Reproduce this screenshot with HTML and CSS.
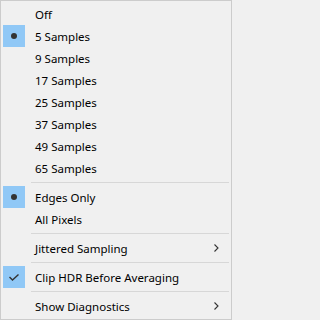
FILE: index.html
```html
<!DOCTYPE html>
<html>
<head>
<meta charset="utf-8">
<link rel="stylesheet" href="styles.css">
</head>
<body>
<div class="menu">
  <div class="item"><span class="icon"></span><span class="label">Off</span></div>
  <div class="item"><span class="icon checked"><span class="dot"></span></span><span class="label">5 Samples</span></div>
  <div class="item"><span class="icon"></span><span class="label">9 Samples</span></div>
  <div class="item"><span class="icon"></span><span class="label">17 Samples</span></div>
  <div class="item"><span class="icon"></span><span class="label">25 Samples</span></div>
  <div class="item"><span class="icon"></span><span class="label">37 Samples</span></div>
  <div class="item"><span class="icon"></span><span class="label">49 Samples</span></div>
  <div class="item"><span class="icon"></span><span class="label">65 Samples</span></div>
  <div class="sep"></div>
  <div class="item"><span class="icon checked"><span class="dot"></span></span><span class="label">Edges Only</span></div>
  <div class="item"><span class="icon"></span><span class="label">All Pixels</span></div>
  <div class="sep"></div>
  <div class="item"><span class="icon"></span><span class="label">Jittered Sampling</span><svg class="arrow" width="5" height="8" viewBox="0 0 5 8"><path d="M0.5 0.5 L4 4 L0.5 7.5" fill="none" stroke="#333" stroke-width="1.1"/></svg></div>
  <div class="sep"></div>
  <div class="item"><span class="icon checked"><svg width="10" height="7" viewBox="0 0 10 7"><path d="M0.5 3 L3.5 6 L9.5 0.5" fill="none" stroke="#333" stroke-width="1.4"/></svg></span><span class="label">Clip HDR Before Averaging</span></div>
  <div class="sep"></div>
  <div class="item"><span class="icon"></span><span class="label">Show Diagnostics</span><svg class="arrow" width="5" height="8" viewBox="0 0 5 8"><path d="M0.5 0.5 L4 4 L0.5 7.5" fill="none" stroke="#333" stroke-width="1.1"/></svg></div>
</div>
</body>
</html>
```

FILE: styles.css
```css
html, body {
  margin: 0;
  padding: 0;
  background: #f0f0f0;
}
.menu {
  width: 232px;
  height: 320px;
  box-sizing: border-box;
  border: 1px solid #cccccc;
  padding: 2px;
  background: #f0f0f0;
  font-family: "Noto Sans", sans-serif;
  font-size: 11.5px;
  color: #000;
  display: flex;
  flex-direction: column;
}
.item {
  height: 22px;
  display: flex;
  align-items: center;
}
.icon {
  width: 22px;
  height: 22px;
  flex: none;
  display: flex;
  align-items: center;
  justify-content: center;
}
.icon.checked {
  background: #90c8f6;
}
.dot {
  width: 6px;
  height: 6px;
  border-radius: 50%;
  background: #333;
}
.label {
  margin-left: 10px;
  flex: 1;
  white-space: nowrap;
}
.arrow {
  flex: none;
  margin-right: 10px;
}
.sep {
  height: 7px;
  flex: none;
  display: flex;
  align-items: center;
  padding-left: 28px;
}
.sep::before {
  content: "";
  display: block;
  width: 100%;
  height: 1px;
  background: #d7d7d7;
}
```
